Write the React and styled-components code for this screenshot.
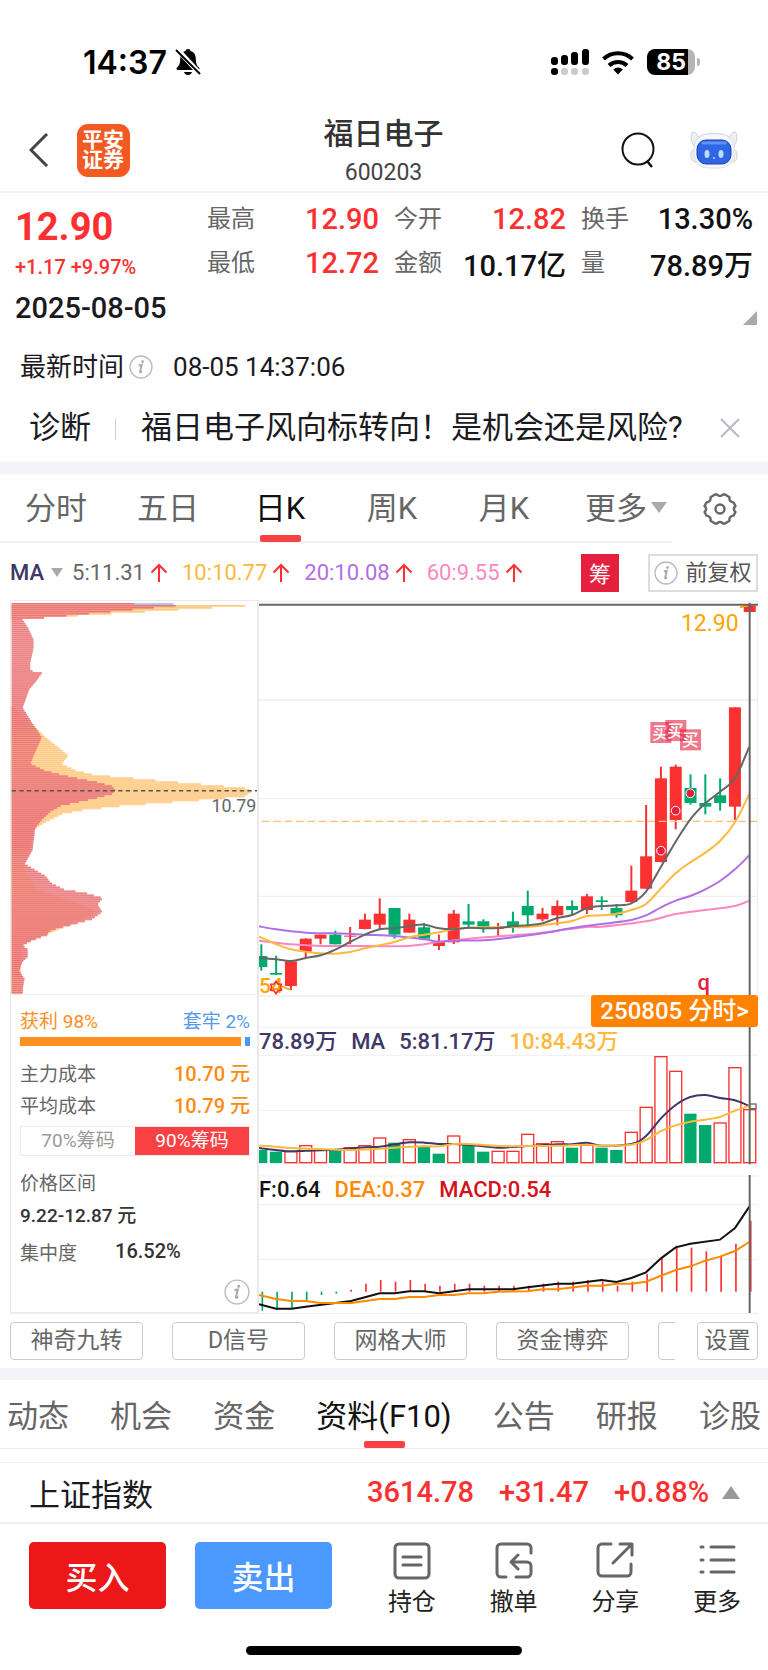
import React, { useState } from 'react'
import styled, { createGlobalStyle } from 'styled-components'

const quotes = [
    { label: '最高', value: '12.90', up: true },
    { label: '今开', value: '12.82', up: true },
    { label: '换手', value: '13.30%' },
    { label: '最低', value: '12.72', up: true },
    { label: '金额', value: '10.17亿' },
    { label: '量', value: '78.89万' },
]

const averages = [
    { text: '5:11.31', color: '#666' },
    { text: '10:10.77', color: '#fdb93e' },
    { text: '20:10.08', color: '#b06fe3' },
    { text: '60:9.55', color: '#ff87c0' },
]

const periods = ['分时', '五日', '日K', '周K', '月K', '更多']
const tools = ['神奇九转', 'D信号', '网格大师', '资金博弈']
const sections = ['动态', '机会', '资金', '资料(F10)', '公告', '研报', '诊股']

const RED = '#fb3030'
const GREEN = '#00aa6c'

// every chart is plotted at three units to the pixel
const FIRST = 34
const STEP = 44.4

// [up, high, low, bodyTop, bodyBottom]
const candles = [
    [0, 1063, 1142, 1098, 1131], [0, 1097, 1155, 1149, 1154], [1, 1110, 1200, 1114, 1188],
    [1, 1045, 1103, 1046, 1085], [1, 1034, 1063, 1034, 1046], [0, 1022, 1063, 1034, 1063],
    [1, 1011, 1063, 1037, 1040], [1, 971, 1018, 989, 1017], [1, 925, 1018, 971, 1004],
    [0, 954, 1046, 954, 1034], [1, 971, 1028, 989, 1028], [0, 999, 1050, 1012, 1046],
    [1, 1034, 1080, 1053, 1068], [1, 960, 1062, 971, 1057], [0, 942, 1012, 994, 1004],
    [0, 988, 1028, 994, 1010], [1, 999, 1040, 1014, 1017], [0, 965, 1028, 994, 1008],
    [0, 902, 1005, 948, 976], [1, 954, 994, 971, 988], [1, 931, 1006, 948, 976],
    [0, 931, 972, 948, 960], [1, 912, 972, 919, 960], [0, 919, 960, 931, 936],
    [0, 942, 983, 954, 976], [1, 827, 938, 902, 936], [1, 645, 897, 799, 896],
    [1, 530, 817, 565, 816], [1, 524, 718, 530, 690], [0, 553, 644, 594, 639],
    [0, 553, 673, 639, 650], [0, 565, 662, 616, 639], [1, 352, 690, 352, 650],
    [1, 44, 66, 46, 66],
]

const ma5 = [[27, 1103], [78, 1108], [123, 1113], [167, 1104], [212, 1096], [256, 1079], [300, 1056], [345, 1034], [389, 1018], [434, 1015], [478, 1008], [523, 1004], [567, 1015], [611, 1018], [656, 1013], [700, 1015], [745, 1014], [789, 1009], [833, 1006], [878, 1000], [922, 984], [966, 975], [1011, 954], [1055, 948], [1100, 946], [1144, 940], [1188, 905], [1233, 830], [1277, 755], [1321, 688], [1366, 640], [1410, 605], [1455, 565], [1498, 470]]
const ma10 = [[27, 1040], [78, 1062], [123, 1078], [167, 1085], [212, 1090], [256, 1091], [300, 1086], [345, 1075], [389, 1066], [434, 1056], [478, 1042], [523, 1034], [567, 1027], [611, 1018], [656, 1014], [700, 1012], [789, 1012], [833, 1011], [878, 1006], [922, 1000], [966, 993], [1011, 978], [1055, 976], [1100, 971], [1144, 960], [1188, 942], [1233, 895], [1277, 850], [1321, 817], [1366, 788], [1410, 753], [1455, 697], [1498, 612]]
const ma20 = [[27, 1009], [78, 1018], [167, 1028], [256, 1030], [345, 1034], [434, 1038], [523, 1048], [567, 1055], [611, 1052], [700, 1051], [789, 1042], [878, 1030], [966, 1014], [1055, 1002], [1144, 990], [1188, 976], [1233, 952], [1277, 932], [1321, 918], [1366, 898], [1410, 873], [1455, 838], [1498, 796]]
const ma60 = [[27, 1052], [123, 1063], [212, 1068], [345, 1068], [478, 1068], [567, 1056], [656, 1046], [745, 1039], [833, 1033], [922, 1022], [1011, 1011], [1055, 1010], [1188, 994], [1277, 972], [1366, 960], [1455, 948], [1498, 932]]

// [up, top]
const volumes = [[0, 510], [0, 515], [1, 515], [1, 497], [1, 510], [0, 510], [1, 503], [1, 497], [1, 474], [0, 488], [1, 479], [0, 500], [0, 521], [1, 468], [0, 493], [0, 515], [1, 514], [1, 514], [1, 463], [1, 491], [1, 485], [0, 503], [1, 496], [0, 503], [0, 510], [1, 457], [1, 382], [1, 230], [1, 274], [0, 401], [0, 435], [1, 429], [1, 263], [1, 389]]
const vol5 = [[27, 504], [78, 510], [123, 514], [167, 512], [256, 509], [345, 502], [389, 500], [434, 493], [478, 487], [523, 488], [567, 492], [611, 492], [656, 495], [700, 499], [745, 503], [833, 498], [922, 493], [966, 493], [1011, 488], [1055, 497], [1144, 492], [1188, 468], [1233, 415], [1277, 375], [1321, 351], [1366, 345], [1410, 354], [1455, 361], [1498, 378]]
const vol10 = [[27, 497], [78, 500], [123, 504], [212, 507], [300, 510], [389, 506], [434, 503], [523, 499], [567, 499], [611, 492], [656, 492], [745, 498], [833, 498], [922, 497], [1011, 494], [1055, 497], [1144, 494], [1188, 480], [1233, 453], [1277, 436], [1321, 425], [1366, 419], [1410, 411], [1455, 392], [1498, 378]]

const macd = [992, 990, 984, 962, 945, 941, 929, 911, 900, 905, 900, 911, 917, 911, 911, 917, 917, 917, 917, 911, 905, 905, 900, 905, 917, 905, 882, 835, 797, 803, 814, 829, 791, 722]
const dif = [[27, 973], [78, 986], [125, 986], [167, 980], [256, 969], [303, 963], [345, 952], [389, 940], [434, 940], [478, 934], [523, 934], [567, 940], [656, 928], [789, 928], [833, 922], [922, 911], [966, 911], [1055, 900], [1100, 906], [1144, 894], [1188, 877], [1233, 835], [1277, 802], [1321, 791], [1410, 779], [1455, 744], [1498, 680]]
const dea = [[27, 945], [78, 957], [123, 963], [167, 963], [212, 969], [303, 969], [389, 957], [434, 957], [478, 951], [523, 951], [567, 945], [611, 945], [656, 940], [700, 940], [745, 935], [833, 934], [878, 928], [922, 928], [1011, 917], [1055, 917], [1100, 911], [1144, 911], [1188, 905], [1277, 870], [1321, 859], [1366, 842], [1410, 830], [1455, 813], [1498, 786]]

// chip distribution, [price row, width]
const chips90 = [[36, 402], [42, 528], [48, 462], [54, 397], [60, 330], [66, 265], [72, 197], [78, 130], [84, 65], [110, 82], [145, 98], [170, 98], [215, 88], [239, 88], [244, 125], [270, 106], [295, 85], [350, 65], [390, 90], [440, 123], [485, 103], [520, 88], [540, 130], [552, 175], [564, 230], [576, 290], [588, 335], [600, 345], [612, 335], [624, 290], [636, 235], [648, 180], [665, 150], [690, 123], [715, 103], [780, 95], [823, 72], [860, 135], [880, 150], [900, 190], [912, 260], [926, 308], [945, 291], [968, 306], [990, 275], [1008, 210], [1018, 170], [1030, 140], [1036, 146], [1045, 118], [1058, 85], [1070, 65], [1080, 80], [1104, 80], [1118, 65], [1145, 54], [1170, 71], [1190, 67], [1218, 65]]
const chips70 = [[36, 32], [42, 738], [48, 637], [54, 536], [60, 435], [66, 333], [72, 232], [78, 130], [84, 32], [345, 32], [415, 110], [440, 135], [495, 204], [520, 182], [540, 225], [552, 275], [558, 330], [564, 400], [576, 535], [588, 673], [594, 737], [603, 760], [618, 737], [624, 678], [630, 598], [636, 518], [642, 437], [648, 358], [654, 303], [660, 246], [672, 185], [690, 148], [705, 120], [720, 98], [780, 88], [830, 65], [900, 110], [945, 235], [968, 290], [990, 248], [1010, 200], [1040, 126], [1070, 60], [1218, 60]]

const curve = (points) => {
    let d = `M${points[0][0]} ${points[0][1]}`
    for (let i = 0; i < points.length - 1; i++) {
        const p0 = points[i - 1] || points[i]
        const p1 = points[i]
        const p2 = points[i + 1]
        const p3 = points[i + 2] || p2
        d += `C${p1[0] + (p2[0] - p0[0]) / 6} ${p1[1] + (p2[1] - p0[1]) / 6} ${p2[0] - (p3[0] - p1[0]) / 6} ${p2[1] - (p3[1] - p1[1]) / 6} ${p2[0]} ${p2[1]}`
    }
    return d
}

const widthAt = (profile, y) => {
    const i = profile.findIndex((p) => p[0] >= y)
    if (i <= 0) return profile[i === 0 ? 0 : profile.length - 1][1]
    const [y0, x0] = profile[i - 1]
    const [y1, x1] = profile[i]
    return x0 + ((x1 - x0) * (y - y0)) / (y1 - y0)
}

const rows = Array.from({ length: 197 }, (_, i) => 36 + i * 6)

function InfoIcon({ size }) {
    return (
        <svg width={size} height={size} viewBox="0 0 24 24" aria-hidden="true">
            <circle cx="12" cy="12" r="11" fill="none" stroke="#bbb" strokeWidth="1.3" />
            <circle cx="13.6" cy="6.6" r="1.4" fill="#aaa" />
            <path d="M9.8 10.6c1.2-.6 2-.9 3-.9l-1.7 7c-.2.8.5.8 2-.4" fill="none" stroke="#aaa" strokeWidth="1.9" />
        </svg>
    )
}

function UpArrow() {
    return (
        <svg width="18" height="20" viewBox="0 0 18 20" aria-hidden="true">
            <path d="M9 19V2M1.500 9.500L9 2l7.500 7.500" fill="none" stroke={RED} strokeWidth="2" />
        </svg>
    )
}

function ChipChart() {
    return (
        <ChipSvg viewBox="30 30 744 1190">
            {rows.map((y) => {
                const w90 = widthAt(chips90, y) - 32
                const w70 = widthAt(chips70, y) - 32
                return (
                    <g key={y}>
                        {y === 36 && <rect x="402" y="36" width="120" height="6" fill="#a9cbfa" />}
                        <rect x="32" y={y} width={w70} height="6" fill="#ffd79c" />
                        <rect x="32" y={y} width={w70} height="3" fill="#ffc780" />
                        <rect x="32" y={y} width={w90} height="6" fill="#f19a9c" />
                        <rect x="32" y={y} width={w90} height="3" fill="#e97579" />
                        <rect x="32" y={y} width={Math.min(w70, w90)} height="6" fill="#f0705a" fillOpacity="0.25" />
                    </g>
                )
            })}
            <path d="M32 604H774" stroke="#555" strokeWidth="5" strokeDasharray="13 10" />
            <PlotText x="772" y="669" fontSize="54" fill="#666" textAnchor="end">10.79</PlotText>
        </ChipSvg>
    )
}

function BuyMark({ x, y }) {
    return (
        <g>
            <rect x={x} y={y} width="63" height="63" fill="#e4203e" fillOpacity="0.6" />
            <PlotText x={x + 31} y={y + 50} fontSize="50" fontWeight="500" fill="#fff" textAnchor="middle">买</PlotText>
        </g>
    )
}

function PriceChart() {
    return (
        <PlotSvg viewBox="27 30 1497 1190">
            <path d="M27 34H1524M27 330H1524M27 626H1524M27 919H1524M27 1218H1524M1522 34V1220" stroke="#f0f0f2" strokeWidth="4" />
            {candles.map(([up, high, low, top, bottom], i) => {
                const x = FIRST + STEP * i
                return (
                    <g key={i} fill={up ? RED : GREEN}>
                        <rect x={x - 3} y={high} width="6" height={low - high} />
                        <rect x={x - 18} y={top} width="36" height={bottom - top} />
                    </g>
                )
            })}
            <path d="M36 694H1524" stroke="#ffbe72" strokeWidth="4" strokeDasharray="23 11" />
            <g fill="none" strokeWidth="6">
                <path d={curve(ma60)} stroke="#ff87c0" />
                <path d={curve(ma20)} stroke="#b06fe3" />
                <path d={curve(ma10)} stroke="#fdb93e" />
                <path d={curve(ma5)} stroke="#666" />
            </g>
            <g fill="#e4203e" stroke="#fff" strokeWidth="3">
                <circle cx="1233" cy="782" r="13" />
                <circle cx="1277" cy="662" r="13" />
                <circle cx="1321" cy="610" r="13" />
            </g>
            <BuyMark x={1201} y={396} />
            <BuyMark x={1246} y={390} />
            <BuyMark x={1290} y={418} />
            <PlotText x="1466" y="122" fontSize="69" fill="#ffa500" textAnchor="end">12.90</PlotText>
            <path d="M1470 52L1498 46" stroke="#ffa500" strokeWidth="5" />
            <PlotText x="27" y="1210" fontSize="63" fontWeight="500" fill="#ffa500">54</PlotText>
            <path d="M92 1188L123 1200" stroke="#ffa500" strokeWidth="5" />
            <path d="M78 1174l6 8 10 1-3 9 3 9-10 1-6 9-6-9-10-1 3-9-3-9 10-1z" fill="none" stroke={RED} strokeWidth="5" />
            <PlotText x="1361" y="1200" fontSize="66" fontWeight="500" fill="#e4203e" textAnchor="middle">q</PlotText>
            <path d="M27 44H1524M1499 38V1220" stroke="#666" strokeWidth="6" />
        </PlotSvg>
    )
}

function VolumeChart() {
    return (
        <PlotSvg viewBox="27 141 1497 414">
            <path d="M27 143H1524M27 226H1524M27 391H1524M27 551H1524" stroke="#f0f0f2" strokeWidth="3" />
            {volumes.map(([up, top], i) => {
                const x = FIRST + STEP * i
                return up
                    ? <rect key={i} x={x - 18} y={top} width="36" height={548 - top} fill="#fff" stroke={RED} strokeWidth="4" />
                    : <rect key={i} x={x - 19} y={top} width="37" height={549 - top} fill={GREEN} />
            })}
            <path d={curve(vol5)} fill="none" stroke="#3e3767" strokeWidth="6" />
            <path d={curve(vol10)} fill="none" stroke="#fdb93e" strokeWidth="6" />
            <rect x="1499" y="372" width="19" height="14" fill="none" stroke="#666" strokeWidth="4" />
            <path d="M1499 141V553" stroke="#666" strokeWidth="6" />
        </PlotSvg>
    )
}

function MacdChart() {
    return (
        <PlotSvg viewBox="27 585 1497 414">
            <path d="M27 588H1524M27 674H1524M27 838H1524" stroke="#f0f0f2" strokeWidth="3" />
            {macd.map((y, i) => (
                <path key={i} d={`M${37 + STEP * i} 935V${y}`} stroke={i < 6 ? GREEN : RED} strokeWidth="5" />
            ))}
            <polyline points={dif.join(' ')} fill="none" stroke="#111" strokeWidth="6" />
            <polyline points={dea.join(' ')} fill="none" stroke="#ff8a00" strokeWidth="6" />
            <path d="M1499 585V999" stroke="#666" strokeWidth="6" />
        </PlotSvg>
    )
}

const actionIcons = {
    持仓: (
        <>
            <rect x="2" y="2" width="34" height="34" rx="4" />
            <path d="M10 15h18M10 23h18" />
        </>
    ),
    撤单: (
        <path d="M36 11V6a4 4 0 0 0-4-4H6a4 4 0 0 0-4 4v25a4 4 0 0 0 4 4h5M21 35h11a4 4 0 0 0 4-4V24a4 4 0 0 0-4-4H17M23 13l-7 7 7 7" />
    ),
    分享: (
        <path d="M15 2H6a4 4 0 0 0-4 4v24a4 4 0 0 0 4 4h25a4 4 0 0 0 4-4V22M24 2h12v11M36 2L17 21" />
    ),
    更多: (
        <path d="M3 5h2M3 18h2M3 30h2M13 5h23M13 18h23M13 30h23" />
    ),
}

function App() {
    const [period, setPeriod] = useState('日K')
    const [section, setSection] = useState('资料(F10)')
    const [range, setRange] = useState('90%筹码')

    return (
        <Page>
            <GlobalStyle />

            <StatusBar>
                <Clock>
                    14:37
                    <svg width="26" height="28" viewBox="0 0 26 28" aria-hidden="true">
                        <path d="M13 1c1.500 0 2.300.8 2.600 2 3.500 1 5.200 4 5.200 7.500 0 6 1.500 7.500 3.200 9 1 1 .6 2.500-1 2.500H3c-1.600 0-2-1.500-1-2.500 1.700-1.500 3.200-3 3.200-9C5.200 7 6.900 4 10.400 3c.3-1.200 1.100-2 2.600-2z" />
                        <path d="M9 24h8c-.6 2-2 3-4 3s-3.400-1-4-3z" />
                        <path d="M2 1l24 26" stroke="#fff" strokeWidth="5" />
                        <path d="M1 2l24 24" stroke="#000" strokeWidth="2" />
                    </svg>
                </Clock>
                <Signals>
                    <svg width="38" height="28" viewBox="0 0 38 28" aria-hidden="true">
                        <rect x="0" y="9" width="7" height="8" rx="3" />
                        <rect x="10" y="7" width="7" height="10" rx="3" />
                        <rect x="20" y="4" width="7" height="13" rx="3" />
                        <rect x="31" y="1" width="7" height="16" rx="3" />
                        <rect x="0" y="20" width="7" height="7" rx="3" />
                        <g fill="#ccc">
                            <rect x="10" y="20" width="7" height="7" rx="3" />
                            <rect x="20" y="20" width="7" height="7" rx="3" />
                            <rect x="31" y="20" width="7" height="7" rx="3" />
                        </g>
                    </svg>
                    <svg width="32" height="25" viewBox="0 0 32 25" fill="none" stroke="#000" strokeWidth="4" aria-hidden="true">
                        <path d="M1.500 9a21 21 0 0 1 29 0" />
                        <path d="M7 15.500a13 13 0 0 1 18 0" />
                        <path d="M16 24.500l-4.800-5a7 7 0 0 1 9.600 0z" fill="#000" stroke="none" />
                    </svg>
                    <Battery>
                        <BatteryBody>85</BatteryBody>
                        <BatteryTip />
                    </Battery>
                </Signals>
            </StatusBar>

            <Header>
                <HeaderSide>
                    <IconButton aria-label="返回">
                        <svg width="20" height="34" viewBox="0 0 20 34" fill="none" stroke="#444" strokeWidth="3">
                            <path d="M18 1L2 17l16 16" />
                        </svg>
                    </IconButton>
                    <Brand>平安证券</Brand>
                </HeaderSide>
                <Title>
                    <h1>福日电子</h1>
                    <p>600203</p>
                </Title>
                <HeaderSide $end>
                    <IconButton aria-label="搜索">
                        <svg width="34" height="36" viewBox="0 0 34 36" fill="none" stroke="#111" strokeWidth="2">
                            <circle cx="17" cy="17" r="15.500" />
                            <path d="M26 29l5 6" strokeWidth="2.500" />
                        </svg>
                    </IconButton>
                    <IconButton aria-label="智能助手">
                        <svg width="48" height="38" viewBox="0 0 48 38">
                            <path d="M5 17C1 11 0 5 2.500 1c3 0 5 2 5.500 5 9-5 23-5 32 0C40.500 3 42.500 1 45.500 1 48 5 47 11 43 17z" fill="#eceff4" stroke="#cfd3dc" />
                            <rect x="1" y="18" width="46" height="13" rx="5" fill="#f3eeee" stroke="#d9d4d6" />
                            <rect x="4" y="3" width="40" height="34" rx="14" fill="#f6f8fb" stroke="#dcdfe6" />
                            <rect x="7" y="9" width="34" height="24" rx="9" fill="#2f66e6" stroke="#1c42a8" />
                            <path d="M13 12h22" stroke="#5f92ff" strokeWidth="3" strokeLinecap="round" />
                            <ellipse cx="17" cy="23" rx="2.500" ry="4" fill="#b9dcff" />
                            <ellipse cx="31" cy="23" rx="2.500" ry="4" fill="#b9dcff" />
                            <circle cx="24" cy="27" r="1" fill="#b9dcff" />
                        </svg>
                    </IconButton>
                </HeaderSide>
            </Header>

            <Quote>
                <Price>
                    <strong>12.90</strong>
                    <span>+1.17 +9.97%</span>
                </Price>
                <QuoteGrid>
                    {quotes.map((q) => (
                        <QuoteItem key={q.label}>
                            <dt>{q.label}</dt>
                            <QuoteValue $up={q.up}>{q.value}</QuoteValue>
                        </QuoteItem>
                    ))}
                </QuoteGrid>
            </Quote>

            <DateRow>
                <span>2025-08-05</span>
                <Corner />
            </DateRow>

            <TimeRow>
                <span>最新时间</span>
                <InfoIcon size={24} />
                <time>08-05 14:37:06</time>
            </TimeRow>

            <Notice>
                <NoticeTag>诊断</NoticeTag>
                <NoticeLink href="#diagnosis">福日电子风向标转向！是机会还是风险?</NoticeLink>
                <IconButton aria-label="关闭">
                    <svg width="20" height="20" viewBox="0 0 20 20" fill="none" stroke="#b9b8c9" strokeWidth="2">
                        <path d="M1 1l18 18M19 1L1 19" />
                    </svg>
                </IconButton>
            </Notice>

            <Band />

            <PeriodBar>
                <Periods>
                    {periods.map((p) => (
                        <Tab key={p} $active={p === period} onClick={() => setPeriod(p)}>
                            {p}
                            {p === '更多' && <TabCaret $size={8} />}
                        </Tab>
                    ))}
                </Periods>
                <IconButton aria-label="图表设置">
                    <svg width="34" height="32" viewBox="0 0 34 32" fill="none" stroke="#666" strokeWidth="2.400" strokeLinejoin="round">
                        <path d="M12 1.500h2.200c1 2 4.600 2 5.600 0H22l4.500 2.700c-.6 2.700 1 5 4 5.200L32.500 13c-2.200 1.800-2.200 4.200 0 6l-2 3.600c-3 .2-4.600 2.500-4 5.200L22 30.500h-2.200c-1-2-4.600-2-5.600 0H12l-4.500-2.700c.6-2.700-1-5-4-5.200L1.500 19c2.200-1.800 2.200-4.200 0-6l2-3.600c3-.2 4.600-2.500 4-5.200z" />
                        <circle cx="17" cy="16" r="4.500" />
                    </svg>
                </IconButton>
            </PeriodBar>

            <AverageBar>
                <MaButton>MA<Caret $size={6} /></MaButton>
                {averages.map((a) => (
                    <Average key={a.text} $color={a.color}>{a.text}<UpArrow /></Average>
                ))}
                <ChipButton>筹</ChipButton>
                <AdjustButton><InfoIcon size={24} />前复权</AdjustButton>
            </AverageBar>

            <Charts>
                <ChipPanel>
                    <ChipChart />
                    <ChipInfo>
                        <ChipRow $color="#ff8f20">
                            <span>获利 98%</span>
                            <Trapped>套牢 2%</Trapped>
                        </ChipRow>
                        <Meter><i /><i /></Meter>
                        <ChipRow>
                            <span>主力成本</span>
                            <Cost>10.70 元</Cost>
                        </ChipRow>
                        <ChipRow>
                            <span>平均成本</span>
                            <Cost>10.79 元</Cost>
                        </ChipRow>
                        <Switch>
                            {['70%筹码', '90%筹码'].map((r) => (
                                <SwitchButton key={r} $on={r === range} onClick={() => setRange(r)}>{r}</SwitchButton>
                            ))}
                        </Switch>
                        <ChipRow><span>价格区间</span></ChipRow>
                        <ChipRow $color="#333"><b>9.22-12.87 元</b></ChipRow>
                        <Focus><span>集中度</span><b>16.52%</b></Focus>
                        <InfoRow><InfoIcon size={26} /></InfoRow>
                    </ChipInfo>
                </ChipPanel>

                <Plots>
                    <PriceChart />
                    <BadgeRow><DayButton>250805 分时&gt;</DayButton></BadgeRow>
                    <Pane>
                        <VolumeChart />
                        <Legend>
                            <LegendItem $color="#3e3767">78.89万</LegendItem>
                            <LegendItem $color="#3e3767">MA</LegendItem>
                            <LegendItem $color="#3e3767">5:81.17万</LegendItem>
                            <LegendItem $color="#fdb93e">10:84.43万</LegendItem>
                        </Legend>
                    </Pane>
                    <Pane>
                        <MacdChart />
                        <Legend>
                            <LegendItem $color="#111">F:0.64</LegendItem>
                            <LegendItem $color="#ff8a00">DEA:0.37</LegendItem>
                            <LegendItem $color="#d5111c">MACD:0.54</LegendItem>
                        </Legend>
                    </Pane>
                </Plots>
            </Charts>

            <ToolBar>
                <ToolScroll>
                    {tools.map((t) => <ToolButton key={t}>{t}</ToolButton>)}
                    <ToolButton aria-label="更多指标" />
                </ToolScroll>
                <ToolButton $small>设置</ToolButton>
            </ToolBar>

            <Band />

            <SectionBar>
                {sections.map((s) => (
                    <Tab key={s} $active={s === section} onClick={() => setSection(s)}>{s}</Tab>
                ))}
            </SectionBar>

            <IndexBar>
                <IndexName>上证指数</IndexName>
                <span>3614.78</span>
                <span>+31.47</span>
                <span>+0.88%</span>
                <Caret $size={9} $up />
            </IndexBar>

            <TradeBar>
                <TradeButton $color="#eb1718">买入</TradeButton>
                <TradeButton $color="#4b98ff">卖出</TradeButton>
                <Actions>
                    {Object.keys(actionIcons).map((name) => (
                        <ActionButton key={name}>
                            <svg width="38" height="38" viewBox="0 0 38 38" fill="none" stroke="#666" strokeWidth="3" strokeLinecap="round" strokeLinejoin="round">
                                {actionIcons[name]}
                            </svg>
                            {name}
                        </ActionButton>
                    ))}
                </Actions>
            </TradeBar>

            <HomeIndicator><i /></HomeIndicator>
        </Page>
    )
}

export default App

const GlobalStyle = createGlobalStyle`
    * {
        box-sizing: border-box;
    }

    body {
        margin: 0;
        background: #fff;
    }

    h1, p, dl, dd {
        margin: 0;
    }

    button {
        margin: 0;
        padding: 0;
        border: 0;
        background: none;
        color: inherit;
        font: inherit;
        cursor: pointer;
    }

    svg {
        display: block;
        flex: none;
    }
`

const Page = styled.div`
    width: 100%;
    overflow: hidden;
    color: #1a1a1f;
    font-family: Roboto, 'Noto Sans CJK SC', sans-serif;
    white-space: nowrap;
`

const StatusBar = styled.div`
    display: flex;
    justify-content: space-between;
    align-items: center;
    height: 108px;
    padding: 16px 68px 0 83px;
`

const Clock = styled.div`
    display: flex;
    align-items: center;
    gap: 8px;
    color: #000;
    font: 600 32px Inter, sans-serif;
`

const Signals = styled.div`
    display: flex;
    align-items: center;
    gap: 13px;
`

const Battery = styled.div`
    display: flex;
    align-items: center;
    gap: 2px;
`

const BatteryBody = styled.div`
    width: 48px;
    height: 26px;
    border-radius: 8px;
    background: linear-gradient(90deg, #000 41px, #b5b5b5 41px);
    color: #fff;
    font: 700 23px/26px Inter, sans-serif;
    text-align: center;
`

const BatteryTip = styled.i`
    width: 3px;
    height: 8px;
    border-radius: 0 4px 4px 0;
    background: #b5b5b5;
`

const Header = styled.header`
    display: grid;
    grid-template-columns: 1fr auto 1fr;
    align-items: center;
    height: 85px;
    padding: 0 30px 0 29px;
    border-bottom: 2px solid #f3f3f5;
`

const HeaderSide = styled.div`
    display: flex;
    align-items: center;
    justify-content: ${props => props.$end ? 'flex-end' : 'flex-start'};
    gap: ${props => props.$end ? '35px' : '28px'};
`

const IconButton = styled.button`
    flex: none;
`

const Brand = styled.div`
    width: 53px;
    height: 53px;
    padding: 6px 5px;
    border-radius: 11px;
    background: #f15a22;
    color: #fff;
    font-size: 21px;
    font-weight: 700;
    line-height: 20px;
    white-space: normal;
`

const Title = styled.div`
    padding-top: 6px;
    text-align: center;

    h1 {
        color: #333;
        font-size: 30px;
        font-weight: 500;
        line-height: 40px;
    }

    p {
        color: #444;
        font-size: 23px;
        line-height: 38px;
    }
`

const Quote = styled.section`
    display: flex;
    padding: 4px 15px 0;
`

const Price = styled.div`
    display: flex;
    flex-direction: column;
    flex: none;
    width: 192px;
    color: ${RED};

    strong {
        font-size: 38px;
        line-height: 60px;
    }

    span {
        font-size: 20px;
        font-weight: 500;
        line-height: 20px;
    }
`

const QuoteGrid = styled.dl`
    display: grid;
    flex: 1;
    grid-template-columns: repeat(3, 1fr);
    column-gap: 15px;
`

const QuoteItem = styled.div`
    display: flex;
    justify-content: space-between;
    align-items: center;
    height: 44px;
    color: #666;
    font-size: 24px;

    dt {
        padding-bottom: 5px;
    }
`

const QuoteValue = styled.dd`
    color: ${props => props.$up ? RED : '#111'};
    font-size: 29px;
    font-weight: 500;
`

const DateRow = styled.div`
    display: flex;
    justify-content: space-between;
    align-items: flex-end;
    height: 40px;
    padding: 0 11px 0 15px;
    font-size: 29px;
    font-weight: 500;
    line-height: 34px;
`

const Corner = styled.i`
    border: 7px solid transparent;
    border-right-color: #aaa;
    border-bottom-color: #aaa;
`

const TimeRow = styled.div`
    display: flex;
    align-items: center;
    height: 84px;
    padding-left: 20px;
    font-size: 26px;

    span {
        padding-bottom: 5px;
    }

    svg {
        margin: 0 20px 0 5px;
    }
`

const Notice = styled.div`
    display: flex;
    align-items: center;
    height: 53px;
    padding: 0 28px 15px 29px;
    font-size: 31px;
    line-height: 40px;
`

const NoticeTag = styled.span`
    margin-right: 25px;
    padding-right: 25px;
    background: linear-gradient(#ccc, #ccc) right 11px / 1px 21px no-repeat;
`

const NoticeLink = styled.a`
    flex: 1;
    color: inherit;
    text-decoration: none;
`

const Band = styled.div`
    height: 12px;
    background: #f3f4f9;
`

const PeriodBar = styled.nav`
    display: flex;
    align-items: center;
    height: 69px;
    padding-right: 31px;
`

const Periods = styled.div`
    display: grid;
    flex: 1;
    grid-template-columns: repeat(6, 1fr);
    height: 69px;
    margin-right: 31px;
    border-bottom: 2px solid #f3f3f5;

    button {
        padding-bottom: 5px;
    }
`

const Tab = styled.button`
    position: relative;
    display: flex;
    justify-content: center;
    align-items: center;
    height: 68px;
    color: ${props => props.$active ? '#111' : '#666'};
    font-size: 31px;

    &::after {
        content: '';
        display: ${props => props.$active ? 'block' : 'none'};
        position: absolute;
        bottom: 0;
        left: calc(50% - 20px);
        width: 41px;
        height: 7px;
        border-radius: 2px;
        background: #f94144;
    }
`

const Caret = styled.i`
    border: ${props => props.$size}px solid transparent;
    border-top: ${props => props.$up ? '0' : `${props.$size + 3}px solid #aaa`};
    border-bottom: ${props => props.$up ? `${props.$size + 4}px solid #999` : '0'};
`

const TabCaret = styled(Caret)`
    margin: 4px -20px 0 4px;
`

const AverageBar = styled.div`
    display: flex;
    align-items: center;
    gap: 14px;
    height: 57px;
    padding: 2px 10px 0;
    font-size: 22px;
`

const MaButton = styled.button`
    display: flex;
    align-items: center;
    gap: 7px;
    margin-right: -5px;
    color: #3e3767;
    font-weight: 500;
`

const Average = styled.span`
    display: flex;
    align-items: center;
    gap: 5px;
    color: ${props => props.$color};
`

const ChipButton = styled.button`
    width: 38px;
    height: 38px;
    margin-left: auto;
    padding-bottom: 2px;
    background: #e4203e;
    color: #fff;
`

const AdjustButton = styled.button`
    display: flex;
    justify-content: center;
    align-items: center;
    gap: 7px;
    width: 110px;
    height: 38px;
    margin-left: 15px;
    border: 2px solid #ddd;
    color: #555;
    line-height: 30px;
`

const Charts = styled.main`
    display: grid;
    grid-template-columns: 249px minmax(0, 1fr);
    margin: 0 10px;
    border-bottom: 1px solid #eee;
`

const ChipPanel = styled.section`
    border: 1px solid #eaeaec;
    border-width: 1px 2px 1px 1px;
`

const ChipSvg = styled.svg`
    width: 100%;
`

const PlotSvg = styled.svg`
    width: 100%;
`

const PlotText = styled.text`
    font-family: Roboto, 'Noto Sans CJK SC', sans-serif;
`

const ChipInfo = styled.div`
    padding: 8px 7px 5px 9px;
    border-top: 1px solid #eee;
    font-size: 19px;
`

const ChipRow = styled.div`
    display: flex;
    justify-content: space-between;
    align-items: center;
    height: 32px;
    color: ${props => props.$color || '#666'};

    b {
        font-weight: 500;
    }
`

const Trapped = styled.span`
    color: #5598ee;
`

const Cost = styled.b`
    color: #ff8a10;
    font-size: 20px;
`

const Meter = styled.div`
    display: grid;
    grid-template-columns: 98fr 2fr;
    gap: 4px;
    height: 9px;
    margin: 2px 0 10px;

    i {
        background: #ff8f20;
    }

    i + i {
        background: #4b98f5;
    }
`

const Switch = styled.div`
    display: grid;
    grid-template-columns: 1fr 1fr;
    height: 30px;
    margin: 6px 0 9px;
    border: 1px solid #eaeaec;
`

const SwitchButton = styled.button`
    background: ${props => props.$on ? '#f94144' : '#fff'};
    color: ${props => props.$on ? '#fff' : '#999'};
    line-height: 28px;
`

const Focus = styled(ChipRow)`
    justify-content: flex-start;
    gap: 38px;
    margin-top: 6px;

    b {
        color: #333;
        font-size: 20px;
    }
`

const InfoRow = styled.div`
    display: flex;
    justify-content: flex-end;
    padding-top: 12px;
`

const Plots = styled.section`
    display: flex;
    flex-direction: column;
`

const BadgeRow = styled.div`
    display: flex;
    justify-content: flex-end;
    align-items: flex-end;
    height: 30px;
`

const DayButton = styled.button`
    z-index: 1;
    flex: none;
    width: 167px;
    height: 32px;
    border-radius: 3px;
    background: #ff8200;
    color: #fff;
    font-size: 24px;
    font-weight: 500;
    line-height: 30px;
`

const Pane = styled.div`
    position: relative;

    & + & {
        margin-top: 10px;
    }
`

const Legend = styled.div`
    position: absolute;
    top: 0;
    left: 0;
    display: flex;
    gap: 14px;
    font-size: 22px;
    line-height: 29px;
`

const LegendItem = styled.span`
    color: ${props => props.$color};
    font-weight: 500;
`

const ToolBar = styled.div`
    display: flex;
    gap: 22px;
    padding: 8px 10px;
`

const ToolScroll = styled.div`
    display: flex;
    flex: 1;
    gap: 29px;
    overflow: hidden;
`

const ToolButton = styled.button`
    flex: none;
    width: ${props => props.$small ? '61px' : '133px'};
    height: 38px;
    border: 1px solid #ccc;
    border-radius: 4px;
    color: #666;
    font-size: 23px;
    line-height: 36px;
`

const SectionBar = styled.nav`
    display: flex;
    justify-content: space-between;
    height: 69px;
    margin-bottom: 13px;
    padding: 0 7px;
    border-bottom: 1px solid #eee;
`

const IndexBar = styled.div`
    display: flex;
    align-items: center;
    gap: 25px;
    height: 62px;
    padding: 0 28px 0 29px;
    border: 2px solid #f0f0f4;
    border-width: 1px 0 2px;
    color: ${RED};
    font-size: 29px;
    font-weight: 500;

    i {
        margin-left: -12px;
    }
`

const IndexName = styled.span`
    flex: 1;
    color: #1a1a1f;
    font-size: 31px;
    font-weight: 400;
`

const TradeBar = styled.footer`
    display: flex;
    height: 114px;
    padding: 18px 0 0 29px;
`

const TradeButton = styled.button`
    flex: none;
    width: 137px;
    height: 67px;
    margin-right: 29px;
    border-radius: 5px;
    background: ${props => props.$color};
    color: #fff;
    font-size: 32px;
    font-weight: 500;
`

const Actions = styled.div`
    display: grid;
    flex: 1;
    grid-template-columns: repeat(4, 1fr);
`

const ActionButton = styled.button`
    display: flex;
    flex-direction: column;
    align-items: center;
    gap: 4px;
    height: 80px;
    color: #222;
    font-size: 24px;
    line-height: 36px;
`

const HomeIndicator = styled.div`
    display: flex;
    justify-content: center;
    height: 33px;
    padding-top: 8px;

    i {
        width: 276px;
        height: 9px;
        border-radius: 5px;
        background: #000;
    }
`
